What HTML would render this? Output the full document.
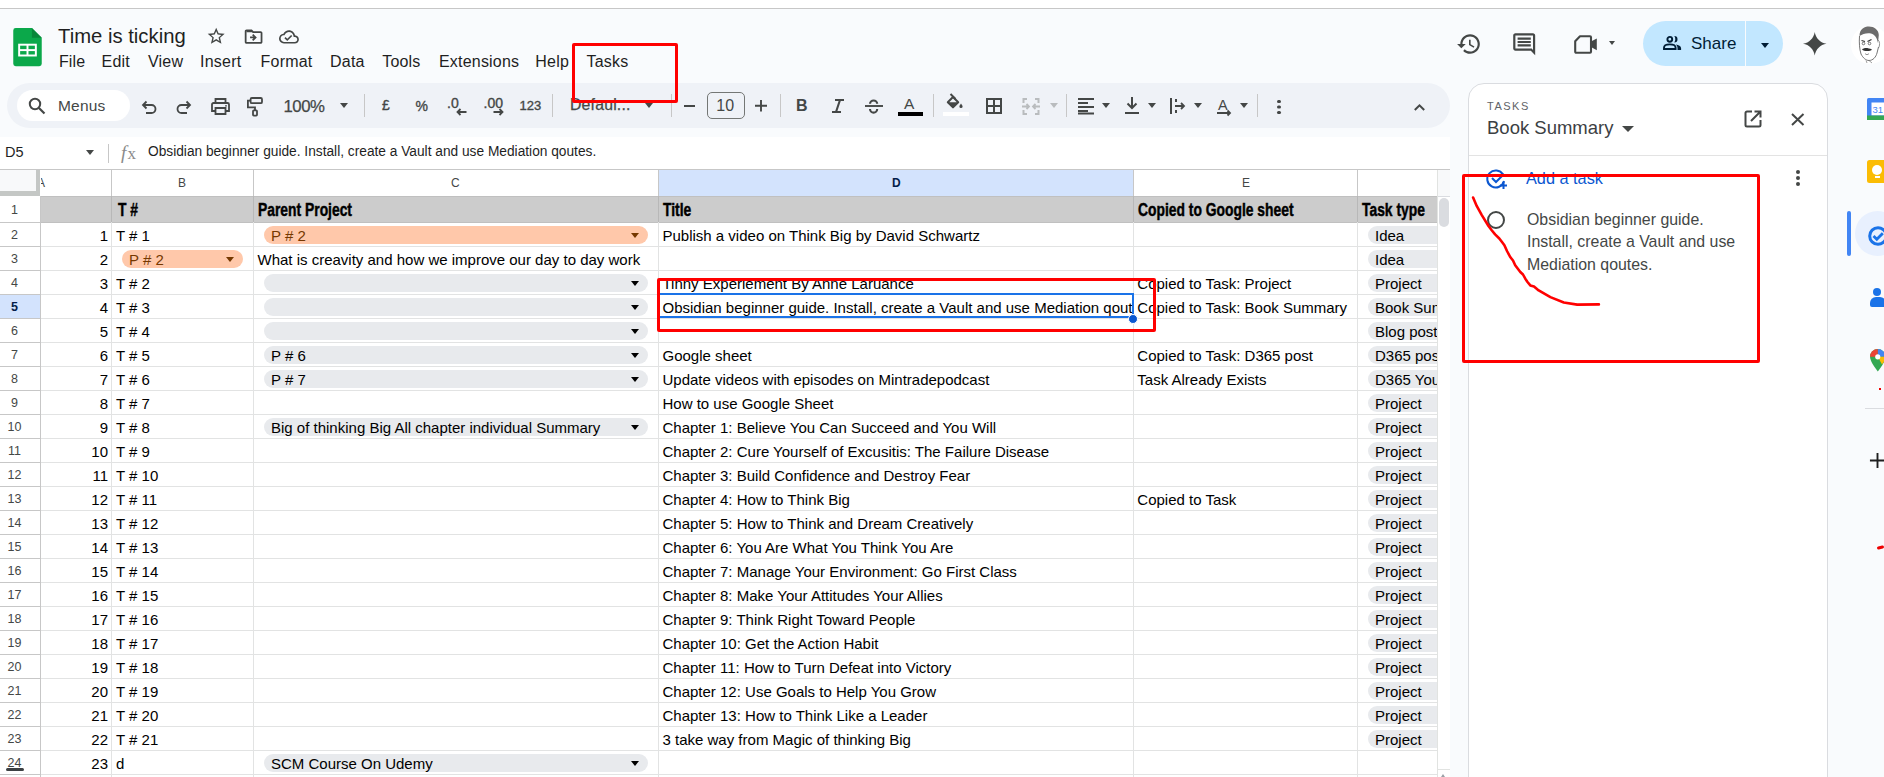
<!DOCTYPE html><html><head><meta charset="utf-8"><style>
*{box-sizing:border-box;margin:0;padding:0}
html,body{width:1884px;height:777px;overflow:hidden;background:#f9fbfd;font-family:"Liberation Sans",sans-serif;position:relative}
.abs{position:absolute}
.t{position:absolute;white-space:nowrap;line-height:1}
.c{position:absolute;white-space:nowrap;overflow:hidden;font-size:15px;color:#000;line-height:24px;height:24px}
.chip{position:absolute;border-radius:9px;background:#e8eaed;height:18px}
.arr{position:absolute;width:0;height:0;border-left:4.5px solid transparent;border-right:4.5px solid transparent;border-top:5px solid #000}
svg{position:absolute;overflow:visible}
.ic{fill:none;stroke:#444746;stroke-width:2}
</style></head><body>
<div class="abs" style="left:0;top:0;width:1884px;height:8px;background:#fff"></div>
<div class="abs" style="left:0;top:8px;width:1884px;height:1px;background:#c7c7c7"></div>
<svg style="left:13px;top:28px" width="29" height="38.3" viewBox="0 0 29 39">
<path d="M0 2.5a2.5 2.5 0 0 1 2.5-2.5h16.5l10 10v26.5a2.5 2.5 0 0 1-2.5 2.5H2.5A2.5 2.5 0 0 1 0 36.5z" fill="#0ba84a"/>
<path d="M19 0l10 10H19z" fill="#08873a"/>
<rect x="5" y="16" width="19" height="13" fill="#fff"/>
<rect x="7" y="18" width="6.5" height="3.5" fill="#0ba84a"/><rect x="15.5" y="18" width="6.5" height="3.5" fill="#0ba84a"/>
<rect x="7" y="23.5" width="6.5" height="3.5" fill="#0ba84a"/><rect x="15.5" y="23.5" width="6.5" height="3.5" fill="#0ba84a"/>
</svg>
<div class="t" style="left:58px;top:25.7px;font-size:20.3px;color:#1f1f1f">Time is ticking</div>
<svg style="left:206.4px;top:25.9px" width="20.4" height="20.4" viewBox="0 0 24 24"><path fill="#444746" d="M22 9.24l-7.19-.62L12 2 9.19 8.63 2 9.24l5.46 4.73L5.82 21 12 17.27 18.18 21l-1.63-7.03L22 9.24zM12 15.4l-3.76 2.27 1-4.28-3.320-2.88 4.38-.38L12 6.1l1.71 4.04 4.38.38-3.32 2.88 1 4.280L12 15.4z"/></svg>
<svg style="left:242.7px;top:26.3px" width="21.2" height="21.2" viewBox="0 0 24 24"><path fill="#444746" d="M20 6h-8l-2-2H4c-1.1 0-1.99.9-1.99 2L2 18c0 1.1.9 2 2 2h16c1.1 0 2-.9 2-2V8c0-1.1-.9-2-2-2zm0 12H4V6h5.17l2 2H20v10zm-8.16-6H8v2h3.84l-1.59 1.59L11.66 17 15.66 13l-4-4-1.41 1.41L11.84 12z"/><path fill="#444746" d="M4 5h6l1.5 2H4z"/></svg>
<svg style="left:279.2px;top:26.5px" width="19.9" height="19.9" viewBox="0 0 24 24"><path fill="#444746" d="M19.35 10.04C18.67 6.590 15.64 4 12 4 9.11 4 6.6 5.64 5.35 8.04 2.34 8.36 0 10.91 0 14c0 3.31 2.69 6 6 6h13c2.76 0 5-2.24 5-5 0-2.64-2.05-4.780-4.65-4.96zM19 18H6c-2.21 0-4-1.79-4-4 0-2.05 1.53-3.76 3.56-3.97l1.07-.11.5-.95C8.08 7.14 9.94 6 12 6c2.62 0 4.88 1.86 5.39 4.43l.3 1.5 1.53.11c1.56.1 2.78 1.41 2.78 2.96 0 1.65-1.35 3-3 3zm-9-3.82l-2.09-2.09L6.5 13.5 10 17l6.01-6.01-1.41-1.41z"/></svg>
<div class="t" style="left:58.9px;top:53.7px;font-size:16px;letter-spacing:0.2px;color:#1f1f1f">File</div>
<div class="t" style="left:101.60000000000001px;top:53.7px;font-size:16px;letter-spacing:0.2px;color:#1f1f1f">Edit</div>
<div class="t" style="left:148.0px;top:53.7px;font-size:16px;letter-spacing:0.2px;color:#1f1f1f">View</div>
<div class="t" style="left:200.1px;top:53.7px;font-size:16px;letter-spacing:0.2px;color:#1f1f1f">Insert</div>
<div class="t" style="left:260.59999999999997px;top:53.7px;font-size:16px;letter-spacing:0.2px;color:#1f1f1f">Format</div>
<div class="t" style="left:330.09999999999997px;top:53.7px;font-size:16px;letter-spacing:0.2px;color:#1f1f1f">Data</div>
<div class="t" style="left:382.2px;top:53.7px;font-size:16px;letter-spacing:0.2px;color:#1f1f1f">Tools</div>
<div class="t" style="left:439.0px;top:53.7px;font-size:16px;letter-spacing:0.2px;color:#1f1f1f">Extensions</div>
<div class="t" style="left:535.3px;top:53.7px;font-size:16px;letter-spacing:0.2px;color:#1f1f1f">Help</div>
<div class="t" style="left:586.5px;top:53.7px;font-size:16px;letter-spacing:0.2px;color:#1f1f1f">Tasks</div>
<svg style="left:1456.3px;top:31px" width="26" height="26" viewBox="0 0 24 24"><path fill="#444746" d="M13 3c-4.97 0-9 4.03-9 9H1l3.89 3.89.07.14L9 12H6c0-3.87 3.13-7 7-7s7 3.13 7 7-3.13 7-7 7c-1.93 0-3.68-.79-4.94-2.06l-1.42 1.42C8.27 19.99 10.51 21 13 21c4.97 0 9-4.03 9-9s-4.03-9-9-9zm-1 5v5l4.28 2.54.72-1.210-3.5-2.08V8H12z"/></svg>
<svg style="left:1510.8px;top:30.8px" width="26.4" height="26.4" viewBox="0 0 24 24"><path fill="#444746" d="M21.99 4c0-1.1-.89-2-1.99-2H4c-1.1 0-2 .9-2 2v12c0 1.1.9 2 2 2h14l4 4-.01-18zM20 4v13.17L18.83 16H4V4h16zM6 12h12v2H6zm0-3h12v2H6zm0-3h12v2H6z"/></svg>
<svg style="left:1574px;top:35px" width="24" height="19" viewBox="0 0 24 19"><path d="M1.2 6.2L6 1.2h10a1 1 0 0 1 1 1V16.8a1 1 0 0 1-1 1H2.2a1 1 0 0 1-1-1z" fill="none" stroke="#444746" stroke-width="2.1" stroke-linejoin="round"/><path d="M17 6.5L22.8 3.4V15.2L17 12z" fill="#444746"/></svg>
<div class="arr" style="left:1609px;top:41px;border-left-width:3.8px;border-right-width:3.8px;border-top-width:4px;border-top-color:#444746"></div>
<div class="abs" style="left:1643px;top:21px;width:140px;height:45px;border-radius:23px;background:#c2e7ff"></div>
<div class="abs" style="left:1744.8px;top:21px;width:1.2px;height:45px;background:#f9fbfd"></div>
<svg style="left:1663px;top:36px" width="19" height="14" viewBox="0 0 19 14"><circle cx="6.8" cy="3.3" r="2.4" fill="none" stroke="#001d35" stroke-width="1.9"/><path d="M1 13v-1.3C1 9.6 3.8 8.4 6.8 8.4s5.8 1.2 5.8 3.3V13z" fill="none" stroke="#001d35" stroke-width="1.9"/><path d="M11.3 0.1A3.2 3.2 0 1 1 11.3 6.5A6 6 0 0 0 11.3 0.1z" fill="#001d35"/><path d="M12.8 8.6c2.8 0.4 5.3 1.6 5.3 3.6V14h-3.6v-2c0-1.4-.6-2.5-1.7-3.4z" fill="#001d35"/></svg>
<div class="t" style="left:1691px;top:35px;font-size:17px;color:#001d35">Share</div>
<div class="arr" style="left:1761px;top:42.7px;border-top-color:#001d35"></div>
<svg style="left:1802.5px;top:31.5px" width="23.5" height="23.5" viewBox="0 0 24 24"><path d="M12 0C13 6.4 17.6 11 24 12 17.6 13 13 17.6 12 24 11 17.6 6.4 13 0 12 6.4 11 11 6.4 12 0z" fill="#444746"/></svg>
<div class="abs" style="left:1851px;top:25.5px;width:38px;height:38px;border-radius:50%;background:#fff"></div>
<svg style="left:1844px;top:18px" width="40" height="52" viewBox="0 0 40 52"><path d="M15.5 18C15.5 11 20 8.5 25 8.5S34.5 11.5 34.8 17L34 25C33 20 31 16.5 27 15.5 23 14.5 18.5 16 15.5 18z" fill="#6d6d6d"/><path d="M15.5 18C15 25 15.5 31 17 36 19 40 22 42.5 25 42.5 29 42.5 32 39 33 35L34.5 29" fill="none" stroke="#666" stroke-width="0.9"/><path d="M34 22C36 23 36 28 34.5 30" fill="none" stroke="#777" stroke-width="0.8"/><path d="M17.5 22.5L21 23.5M23.5 23.5L27.5 21.5" stroke="#333" stroke-width="1.3"/><circle cx="19.5" cy="25.5" r="1.3" fill="none" stroke="#555" stroke-width="0.8"/><circle cx="25.5" cy="25.5" r="1.3" fill="none" stroke="#555" stroke-width="0.8"/><path d="M18 31.5C20 29.5 23.5 29.5 28 31.5 26.5 33.5 20 33.5 18 31.5z" fill="#333"/><path d="M21 35.5C22 37 24 37 25 35.5" fill="none" stroke="#777" stroke-width="0.8"/><path d="M22 42.5L23 45M25 42.5L28 45" stroke="#888" stroke-width="0.8"/></svg>
<div class="abs" style="left:7px;top:83px;width:1443px;height:45px;border-radius:23px;background:#eff2f7"></div>
<div class="abs" style="left:17px;top:90px;width:113px;height:31px;border-radius:16px;background:#fff"></div>
<svg style="left:28px;top:97px" width="18" height="18" viewBox="0 0 18 18"><circle cx="7" cy="7" r="5.2" fill="none" stroke="#444746" stroke-width="2"/><path d="M11 11l5.5 5.5" stroke="#444746" stroke-width="2.2"/></svg>
<div class="t" style="left:58px;top:98px;font-size:15.5px;letter-spacing:0.2px;color:#444746">Menus</div>
<svg style="left:141px;top:100px" width="16" height="13" viewBox="0 0 16 13"><path d="M2 5h8.5a4 4 0 0 1 0 8H5" fill="none" stroke="#444746" stroke-width="1.8"/><path d="M5.5 1.5L2 5l3.5 3.5" fill="none" stroke="#444746" stroke-width="1.8"/></svg>
<svg style="left:176px;top:100px" width="16" height="13" viewBox="0 0 16 13"><path d="M14 5H5.5a4 4 0 0 0 0 8H11" fill="none" stroke="#444746" stroke-width="1.8"/><path d="M10.5 1.5L14 5l-3.5 3.5" fill="none" stroke="#444746" stroke-width="1.8"/></svg>
<svg style="left:211px;top:98px" width="19" height="17" viewBox="0 0 19 17"><path d="M4.5 5V1h10v4" fill="none" stroke="#444746" stroke-width="1.8"/><path d="M4 13H1V6.5a1.5 1.5 0 0 1 1.5-1.5h14A1.5 1.5 0 0 1 18 6.5V13h-3" fill="none" stroke="#444746" stroke-width="1.8"/><path d="M4.5 10h10v6h-10z" fill="none" stroke="#444746" stroke-width="1.8"/><circle cx="15" cy="7.8" r="0.9" fill="#444746"/></svg>
<svg style="left:246px;top:97px" width="17" height="20" viewBox="0 0 17 20"><rect x="4.6" y="1" width="11.4" height="5.2" rx="1.3" fill="none" stroke="#444746" stroke-width="1.8"/><path d="M4.6 3.6H1.9V10.4H9V13.4" fill="none" stroke="#444746" stroke-width="1.8"/><rect x="7" y="13.4" width="4" height="5.2" rx="0.8" fill="none" stroke="#444746" stroke-width="1.8"/></svg>
<div class="t" style="left:283.5px;top:98.6px;font-size:16.8px;letter-spacing:-0.5px;-webkit-text-stroke:0.25px #444746;color:#444746">100%</div>
<div class="arr" style="left:340px;top:103px;border-top-color:#444746"></div>
<div class="abs" style="left:364px;top:94px;width:1px;height:23px;background:#c7c7c7"></div>
<div class="abs" style="left:552px;top:94px;width:1px;height:23px;background:#c7c7c7"></div>
<div class="abs" style="left:671px;top:94px;width:1px;height:23px;background:#c7c7c7"></div>
<div class="abs" style="left:780px;top:94px;width:1px;height:23px;background:#c7c7c7"></div>
<div class="abs" style="left:933px;top:94px;width:1px;height:23px;background:#c7c7c7"></div>
<div class="abs" style="left:1066px;top:94px;width:1px;height:23px;background:#c7c7c7"></div>
<div class="abs" style="left:1257px;top:94px;width:1px;height:23px;background:#c7c7c7"></div>
<div class="t" style="left:382px;top:98px;font-size:14px;-webkit-text-stroke:0.35px #444746;color:#444746">£</div>
<div class="t" style="left:415.5px;top:98.5px;font-size:14px;-webkit-text-stroke:0.35px #444746;color:#444746">%</div>
<div class="t" style="left:447px;top:95.5px;font-size:14px;-webkit-text-stroke:0.35px #444746;color:#444746">.0</div>
<svg style="left:456px;top:108px" width="11" height="8" viewBox="0 0 11 8"><path d="M10.5 4H2M4.5 1L1.5 4l3 3" fill="none" stroke="#444746" stroke-width="1.8"/></svg>
<div class="t" style="left:483.5px;top:95.5px;font-size:14px;-webkit-text-stroke:0.35px #444746;color:#444746">.00</div>
<svg style="left:492.5px;top:108px" width="11" height="8" viewBox="0 0 11 8"><path d="M0.5 4H9M6.5 1l3 3-3 3" fill="none" stroke="#444746" stroke-width="1.8"/></svg>
<div class="t" style="left:519.5px;top:98.5px;font-size:13px;-webkit-text-stroke:0.35px #444746;color:#444746">123</div>
<div class="t" style="left:570px;top:96.8px;font-size:15.8px;letter-spacing:0.2px;-webkit-text-stroke:0.25px #444746;color:#444746">Defaul...</div>
<div class="arr" style="left:645px;top:103px;border-top-color:#444746"></div>
<div class="abs" style="left:684px;top:105px;width:11px;height:2px;background:#444746"></div>
<div class="abs" style="left:707px;top:92px;width:38px;height:27px;border:1px solid #747775;border-radius:5px"></div>
<div class="t" style="left:716.3px;top:97.6px;font-size:16px;color:#444746">10</div>
<svg style="left:755.3px;top:100px" width="12" height="11.5" viewBox="0 0 12 11.5"><path d="M6 0v11.5M0 5.8h12" stroke="#444746" stroke-width="1.9"/></svg>
<div class="t" style="left:796px;top:98px;font-size:16px;color:#444746;font-weight:bold">B</div>
<svg style="left:830px;top:97px" width="16" height="17" viewBox="0 0 16 17"><path d="M5 3h9M2 15h9M10 3L6 15" fill="none" stroke="#444746" stroke-width="2.1"/></svg>
<svg style="left:864px;top:99px" width="20" height="16" viewBox="0 0 20 16"><path d="M1 7h18" stroke="#444746" stroke-width="1.9"/><path d="M6 4.8a3.6 3.3 0 0 1 7.2 0M6 10a3.6 3.6 0 0 0 7.2 0" fill="none" stroke="#444746" stroke-width="2.1"/></svg>
<div class="t" style="left:904px;top:96px;font-size:15.5px;color:#444746">A</div>
<div class="abs" style="left:898px;top:112px;width:25px;height:4px;background:#000"></div>
<svg style="left:946px;top:93px" width="18" height="16" viewBox="0 0 18 16"><path d="M4.5 1l5 5" stroke="#444746" stroke-width="2"/><path d="M7 4L1.8 9.2l5.2 5.2 5.2-5.2z" fill="none" stroke="#444746" stroke-width="2" stroke-linejoin="round"/><path d="M2.2 9.2h10l-5.2 5.2z" fill="#444746"/><path d="M15 10.5c.9 1.3 1.6 2.1 1.6 2.9a1.6 1.6 0 0 1-3.2 0c0-.8.7-1.6 1.6-2.9z" fill="#444746"/></svg>
<div class="abs" style="left:943px;top:112px;width:26px;height:4px;background:#fff"></div>
<svg style="left:986px;top:98px" width="16" height="16" viewBox="0 0 16 16"><path d="M1 1h14v14H1zM8 1v14M1 8h14" fill="none" stroke="#444746" stroke-width="2"/></svg>
<svg style="left:1022px;top:98px" width="18" height="17" viewBox="0 0 18 17"><path d="M5 1H1.5v4M1.5 12v4H5M13 1h3.5v4M16.5 12v4H13" fill="none" stroke="#b9bcbe" stroke-width="2"/><path d="M0 8.5h7M4.5 6L7 8.5 4.5 11M18 8.5h-7M13.5 6L11 8.5l2.5 2.5" fill="none" stroke="#b9bcbe" stroke-width="1.8"/></svg>
<div class="arr" style="left:1050px;top:103px;border-top-color:#b9bcbe"></div>
<svg style="left:1078px;top:98px" width="16" height="16" viewBox="0 0 16 16"><path d="M0 1h16M0 5h10M0 9h16M0 13h10M0 15.5h16" stroke="#444746" stroke-width="2"/></svg>
<div class="arr" style="left:1102px;top:103px;border-top-color:#444746"></div>
<svg style="left:1125px;top:97px" width="14" height="17" viewBox="0 0 14 17"><path d="M7 0v11M2.5 6.5L7 11l4.5-4.5M0 16h14" fill="none" stroke="#444746" stroke-width="2"/></svg>
<div class="arr" style="left:1148px;top:103px;border-top-color:#444746"></div>
<svg style="left:1170px;top:98px" width="15" height="16" viewBox="0 0 15 16"><path d="M1 0v16M6 1v3M6 7v2M6 12v3" fill="none" stroke="#444746" stroke-width="2"/><path d="M6 8h8M11 5l3 3-3 3" fill="none" stroke="#444746" stroke-width="1.8"/></svg>
<div class="arr" style="left:1194px;top:103px;border-top-color:#444746"></div>
<div class="t" style="left:1218px;top:98px;font-size:14.5px;color:#444746">A</div>
<svg style="left:1217px;top:109px" width="15" height="8" viewBox="0 0 15 8"><path d="M0 4h13M10.5 1.5L13 4l-2.5 2.5" fill="none" stroke="#444746" stroke-width="1.8"/></svg>
<div class="arr" style="left:1240px;top:103px;border-top-color:#444746"></div>
<div class="abs" style="left:1277px;top:99.5px;width:3.5px;height:3.5px;border-radius:2px;background:#444746;box-shadow:0 5.5px 0 #444746,0 11px 0 #444746"></div>
<svg style="left:1414px;top:102.5px" width="11" height="8" viewBox="0 0 11 8"><path d="M0.8 7l4.7-4.7 4.7 4.7" fill="none" stroke="#444746" stroke-width="2"/></svg>
<div class="abs" style="left:0;top:137px;width:1450px;height:32px;background:#fff"></div>
<div class="t" style="left:5px;top:145px;font-size:14.5px;color:#1f1f1f">D5</div>
<div class="arr" style="left:86px;top:150px;border-top-color:#444746"></div>
<div class="abs" style="left:108px;top:144px;width:1px;height:19px;background:#c7c7c7"></div>
<div class="t" style="left:121px;top:143px;font-size:19px;color:#8a8a8a;font-style:italic;font-family:'Liberation Serif',serif">f</div><div class="t" style="left:127.5px;top:145px;font-size:17px;color:#8a8a8a;font-family:'Liberation Serif',serif">x</div>
<div class="t" style="left:147.5px;top:143.8px;font-size:14px;transform:scaleX(0.98);transform-origin:0 0;color:#1f1f1f">Obsidian beginner guide. Install, create a Vault and use Mediation qoutes.</div>
<div class="abs" style="left:0;top:169px;width:1437px;height:608px;background:#fff"></div>
<div class="abs" style="left:1437px;top:169px;width:13px;height:608px;background:#fff"></div>
<div class="abs" style="left:1437px;top:769px;width:13px;height:1px;background:#e1e3e1"></div>
<div class="abs" style="left:1441px;top:774px;width:0;height:0;border-left:2.5px solid transparent;border-right:2.5px solid transparent;border-bottom:3px solid #9aa0a6"></div>
<div class="abs" style="left:1437px;top:170px;width:13px;height:26px;background:#f8f9fa"></div>
<div class="abs" style="left:1437px;top:196px;width:13px;height:1px;background:#dadce0"></div>
<div class="abs" style="left:1437px;top:170px;width:1px;height:607px;background:#e1e3e1"></div>
<div class="abs" style="left:658px;top:170px;width:475px;height:26px;background:#d3e3fd"></div>
<div class="abs" style="left:0;top:170px;width:36px;height:21px;background:#f8f9fa"></div>
<div class="abs" style="left:36px;top:170px;width:4px;height:26px;background:#c4c7c5"></div>
<div class="abs" style="left:0;top:191px;width:40px;height:5px;background:#c4c7c5"></div>
<div class="abs" style="left:40px;top:196px;width:1397px;height:26px;background:#cccccc"></div>
<div class="abs" style="left:0;top:294px;width:40px;height:24px;background:#d3e3fd"></div>
<div class="abs" style="left:0;top:169px;width:1450px;height:1px;background:#c7c7c7"></div>
<div class="abs" style="left:40px;top:196px;width:1397px;height:1px;background:#c0c0c0"></div>
<div class="abs" style="left:40px;top:222px;width:1397px;height:1px;background:#c0c0c0"></div>
<div class="abs" style="left:0;top:222px;width:40px;height:1px;background:#c7c7c7"></div>
<div class="abs" style="left:40px;top:246px;width:1397px;height:1px;background:#e2e3e3"></div>
<div class="abs" style="left:0;top:246px;width:40px;height:1px;background:#c7c7c7"></div>
<div class="abs" style="left:40px;top:270px;width:1397px;height:1px;background:#e2e3e3"></div>
<div class="abs" style="left:0;top:270px;width:40px;height:1px;background:#c7c7c7"></div>
<div class="abs" style="left:40px;top:294px;width:1397px;height:1px;background:#e2e3e3"></div>
<div class="abs" style="left:0;top:294px;width:40px;height:1px;background:#c7c7c7"></div>
<div class="abs" style="left:40px;top:318px;width:1397px;height:1px;background:#e2e3e3"></div>
<div class="abs" style="left:0;top:318px;width:40px;height:1px;background:#c7c7c7"></div>
<div class="abs" style="left:40px;top:342px;width:1397px;height:1px;background:#e2e3e3"></div>
<div class="abs" style="left:0;top:342px;width:40px;height:1px;background:#c7c7c7"></div>
<div class="abs" style="left:40px;top:366px;width:1397px;height:1px;background:#e2e3e3"></div>
<div class="abs" style="left:0;top:366px;width:40px;height:1px;background:#c7c7c7"></div>
<div class="abs" style="left:40px;top:390px;width:1397px;height:1px;background:#e2e3e3"></div>
<div class="abs" style="left:0;top:390px;width:40px;height:1px;background:#c7c7c7"></div>
<div class="abs" style="left:40px;top:414px;width:1397px;height:1px;background:#e2e3e3"></div>
<div class="abs" style="left:0;top:414px;width:40px;height:1px;background:#c7c7c7"></div>
<div class="abs" style="left:40px;top:438px;width:1397px;height:1px;background:#e2e3e3"></div>
<div class="abs" style="left:0;top:438px;width:40px;height:1px;background:#c7c7c7"></div>
<div class="abs" style="left:40px;top:462px;width:1397px;height:1px;background:#e2e3e3"></div>
<div class="abs" style="left:0;top:462px;width:40px;height:1px;background:#c7c7c7"></div>
<div class="abs" style="left:40px;top:486px;width:1397px;height:1px;background:#e2e3e3"></div>
<div class="abs" style="left:0;top:486px;width:40px;height:1px;background:#c7c7c7"></div>
<div class="abs" style="left:40px;top:510px;width:1397px;height:1px;background:#e2e3e3"></div>
<div class="abs" style="left:0;top:510px;width:40px;height:1px;background:#c7c7c7"></div>
<div class="abs" style="left:40px;top:534px;width:1397px;height:1px;background:#e2e3e3"></div>
<div class="abs" style="left:0;top:534px;width:40px;height:1px;background:#c7c7c7"></div>
<div class="abs" style="left:40px;top:558px;width:1397px;height:1px;background:#e2e3e3"></div>
<div class="abs" style="left:0;top:558px;width:40px;height:1px;background:#c7c7c7"></div>
<div class="abs" style="left:40px;top:582px;width:1397px;height:1px;background:#e2e3e3"></div>
<div class="abs" style="left:0;top:582px;width:40px;height:1px;background:#c7c7c7"></div>
<div class="abs" style="left:40px;top:606px;width:1397px;height:1px;background:#e2e3e3"></div>
<div class="abs" style="left:0;top:606px;width:40px;height:1px;background:#c7c7c7"></div>
<div class="abs" style="left:40px;top:630px;width:1397px;height:1px;background:#e2e3e3"></div>
<div class="abs" style="left:0;top:630px;width:40px;height:1px;background:#c7c7c7"></div>
<div class="abs" style="left:40px;top:654px;width:1397px;height:1px;background:#e2e3e3"></div>
<div class="abs" style="left:0;top:654px;width:40px;height:1px;background:#c7c7c7"></div>
<div class="abs" style="left:40px;top:678px;width:1397px;height:1px;background:#e2e3e3"></div>
<div class="abs" style="left:0;top:678px;width:40px;height:1px;background:#c7c7c7"></div>
<div class="abs" style="left:40px;top:702px;width:1397px;height:1px;background:#e2e3e3"></div>
<div class="abs" style="left:0;top:702px;width:40px;height:1px;background:#c7c7c7"></div>
<div class="abs" style="left:40px;top:726px;width:1397px;height:1px;background:#e2e3e3"></div>
<div class="abs" style="left:0;top:726px;width:40px;height:1px;background:#c7c7c7"></div>
<div class="abs" style="left:40px;top:750px;width:1397px;height:1px;background:#e2e3e3"></div>
<div class="abs" style="left:0;top:750px;width:40px;height:1px;background:#c7c7c7"></div>
<div class="abs" style="left:40px;top:774px;width:1397px;height:1px;background:#e2e3e3"></div>
<div class="abs" style="left:0;top:774px;width:40px;height:1px;background:#c7c7c7"></div>
<div class="abs" style="left:111px;top:196px;width:1px;height:581px;background:#e2e3e3"></div>
<div class="abs" style="left:111px;top:170px;width:1px;height:26px;background:#c7c7c7"></div>
<div class="abs" style="left:111px;top:196px;width:1px;height:26px;background:#b8b8b8"></div>
<div class="abs" style="left:253px;top:196px;width:1px;height:581px;background:#e2e3e3"></div>
<div class="abs" style="left:253px;top:170px;width:1px;height:26px;background:#c7c7c7"></div>
<div class="abs" style="left:253px;top:196px;width:1px;height:26px;background:#b8b8b8"></div>
<div class="abs" style="left:658px;top:196px;width:1px;height:581px;background:#e2e3e3"></div>
<div class="abs" style="left:658px;top:170px;width:1px;height:26px;background:#c7c7c7"></div>
<div class="abs" style="left:658px;top:196px;width:1px;height:26px;background:#b8b8b8"></div>
<div class="abs" style="left:1133px;top:196px;width:1px;height:581px;background:#e2e3e3"></div>
<div class="abs" style="left:1133px;top:170px;width:1px;height:26px;background:#c7c7c7"></div>
<div class="abs" style="left:1133px;top:196px;width:1px;height:26px;background:#b8b8b8"></div>
<div class="abs" style="left:1357px;top:196px;width:1px;height:581px;background:#e2e3e3"></div>
<div class="abs" style="left:1357px;top:170px;width:1px;height:26px;background:#c7c7c7"></div>
<div class="abs" style="left:1357px;top:196px;width:1px;height:26px;background:#b8b8b8"></div>
<div class="abs" style="left:40px;top:196px;width:1px;height:581px;background:#c7c7c7"></div>
<div class="t" style="left:178px;top:177px;font-size:12px;color:#444746">B</div>
<div class="t" style="left:451px;top:177px;font-size:12px;color:#444746">C</div>
<div class="t" style="left:892px;top:177px;font-size:12px;color:#041e49;font-weight:bold">D</div>
<div class="t" style="left:1242px;top:177px;font-size:12px;color:#444746">E</div>
<div class="abs" style="left:41px;top:170px;width:8px;height:25px;overflow:hidden"><div class="t" style="left:-4px;top:7px;font-size:12px;color:#444746">A</div></div>
<div class="t" style="left:0;width:29px;text-align:center;top:204px;font-size:12.5px;color:#444746;">1</div>
<div class="t" style="left:0;width:29px;text-align:center;top:229px;font-size:12.5px;color:#444746;">2</div>
<div class="t" style="left:0;width:29px;text-align:center;top:253px;font-size:12.5px;color:#444746;">3</div>
<div class="t" style="left:0;width:29px;text-align:center;top:277px;font-size:12.5px;color:#444746;">4</div>
<div class="t" style="left:0;width:29px;text-align:center;top:301px;font-size:12.5px;font-weight:bold;color:#041e49;">5</div>
<div class="t" style="left:0;width:29px;text-align:center;top:325px;font-size:12.5px;color:#444746;">6</div>
<div class="t" style="left:0;width:29px;text-align:center;top:349px;font-size:12.5px;color:#444746;">7</div>
<div class="t" style="left:0;width:29px;text-align:center;top:373px;font-size:12.5px;color:#444746;">8</div>
<div class="t" style="left:0;width:29px;text-align:center;top:397px;font-size:12.5px;color:#444746;">9</div>
<div class="t" style="left:0;width:29px;text-align:center;top:421px;font-size:12.5px;color:#444746;">10</div>
<div class="t" style="left:0;width:29px;text-align:center;top:445px;font-size:12.5px;color:#444746;">11</div>
<div class="t" style="left:0;width:29px;text-align:center;top:469px;font-size:12.5px;color:#444746;">12</div>
<div class="t" style="left:0;width:29px;text-align:center;top:493px;font-size:12.5px;color:#444746;">13</div>
<div class="t" style="left:0;width:29px;text-align:center;top:517px;font-size:12.5px;color:#444746;">14</div>
<div class="t" style="left:0;width:29px;text-align:center;top:541px;font-size:12.5px;color:#444746;">15</div>
<div class="t" style="left:0;width:29px;text-align:center;top:565px;font-size:12.5px;color:#444746;">16</div>
<div class="t" style="left:0;width:29px;text-align:center;top:589px;font-size:12.5px;color:#444746;">17</div>
<div class="t" style="left:0;width:29px;text-align:center;top:613px;font-size:12.5px;color:#444746;">18</div>
<div class="t" style="left:0;width:29px;text-align:center;top:637px;font-size:12.5px;color:#444746;">19</div>
<div class="t" style="left:0;width:29px;text-align:center;top:661px;font-size:12.5px;color:#444746;">20</div>
<div class="t" style="left:0;width:29px;text-align:center;top:685px;font-size:12.5px;color:#444746;">21</div>
<div class="t" style="left:0;width:29px;text-align:center;top:709px;font-size:12.5px;color:#444746;">22</div>
<div class="t" style="left:0;width:29px;text-align:center;top:733px;font-size:12.5px;color:#444746;">23</div>
<div class="t" style="left:0;width:29px;text-align:center;top:757px;font-size:12.5px;color:#444746;">24</div>
<div class="abs" style="left:6px;top:768px;width:18px;height:3px;border-radius:1.5px;background:#3c4043"></div>
<div class="t" style="left:118px;top:201px;font-size:18px;font-weight:bold;color:#000;-webkit-text-stroke:0.45px #000;transform:scaleX(0.77);transform-origin:0 0">T #</div>
<div class="t" style="left:258px;top:201px;font-size:18px;font-weight:bold;color:#000;-webkit-text-stroke:0.45px #000;transform:scaleX(0.77);transform-origin:0 0">Parent Project</div>
<div class="t" style="left:663px;top:201px;font-size:18px;font-weight:bold;color:#000;-webkit-text-stroke:0.45px #000;transform:scaleX(0.77);transform-origin:0 0">Title</div>
<div class="t" style="left:1138px;top:201px;font-size:18px;font-weight:bold;color:#000;-webkit-text-stroke:0.45px #000;transform:scaleX(0.77);transform-origin:0 0">Copied to Google sheet</div>
<div class="t" style="left:1362px;top:201px;font-size:18px;font-weight:bold;color:#000;-webkit-text-stroke:0.45px #000;transform:scaleX(0.77);transform-origin:0 0">Task type</div>
<div class="c" style="left:40px;top:223.5px;width:71px;text-align:right;padding-right:3px">1</div>
<div class="c" style="left:112px;top:223.5px;width:140px;padding-left:4px">T # 1</div>
<div class="chip" style="left:264px;top:225.5px;width:384px;background:#ffc8aa"></div>
<div class="t" style="left:271px;top:228px;font-size:15px;color:#753800">P # 2</div>
<div class="arr" style="left:631px;top:232.5px;border-top-color:#753800"></div>
<div class="c" style="left:659px;top:223.5px;width:474px;padding-left:3.5px">Publish a video on Think Big by David Schwartz</div>
<div class="c" style="left:1134px;top:223.5px;width:223px;padding-left:3.3px"></div>
<div class="abs" style="left:1358px;top:223px;width:79px;height:23px;overflow:hidden"><div class="chip" style="left:10px;top:2.5px;width:90px"></div><div class="c" style="left:17px;top:0.5px;width:62px">Idea</div></div>
<div class="c" style="left:40px;top:247.5px;width:71px;text-align:right;padding-right:3px">2</div>
<div class="chip" style="left:122px;top:249.5px;width:121px;background:#ffc8aa"></div>
<div class="t" style="left:129px;top:252px;font-size:15px;color:#753800">P # 2</div>
<div class="arr" style="left:226px;top:256.5px;border-top-color:#753800"></div>
<div class="c" style="left:254px;top:247.5px;width:400px;padding-left:3.5px">What is creavity and how we improve our day to day work</div>
<div class="c" style="left:659px;top:247.5px;width:474px;padding-left:3.5px"></div>
<div class="c" style="left:1134px;top:247.5px;width:223px;padding-left:3.3px"></div>
<div class="abs" style="left:1358px;top:247px;width:79px;height:23px;overflow:hidden"><div class="chip" style="left:10px;top:2.5px;width:90px"></div><div class="c" style="left:17px;top:0.5px;width:62px">Idea</div></div>
<div class="c" style="left:40px;top:271.5px;width:71px;text-align:right;padding-right:3px">3</div>
<div class="c" style="left:112px;top:271.5px;width:140px;padding-left:4px">T # 2</div>
<div class="chip" style="left:264px;top:273.5px;width:384px;background:#e8eaed"></div>
<div class="arr" style="left:631px;top:280.5px;border-top-color:#000"></div>
<div class="c" style="left:659px;top:271.5px;width:474px;padding-left:3.5px">Tinny Experiement By Anne Laruance</div>
<div class="c" style="left:1134px;top:271.5px;width:223px;padding-left:3.3px">Copied to Task: Project</div>
<div class="abs" style="left:1358px;top:271px;width:79px;height:23px;overflow:hidden"><div class="chip" style="left:10px;top:2.5px;width:90px"></div><div class="c" style="left:17px;top:0.5px;width:62px">Project</div></div>
<div class="c" style="left:40px;top:295.5px;width:71px;text-align:right;padding-right:3px">4</div>
<div class="c" style="left:112px;top:295.5px;width:140px;padding-left:4px">T # 3</div>
<div class="chip" style="left:264px;top:297.5px;width:384px;background:#e8eaed"></div>
<div class="arr" style="left:631px;top:304.5px;border-top-color:#000"></div>
<div class="c" style="left:659px;top:295.5px;width:474px;padding-left:3.5px">Obsidian beginner guide. Install, create a Vault and use Mediation qoutes.</div>
<div class="c" style="left:1134px;top:295.5px;width:223px;padding-left:3.3px">Copied to Task: Book Summary</div>
<div class="abs" style="left:1358px;top:295px;width:79px;height:23px;overflow:hidden"><div class="chip" style="left:10px;top:2.5px;width:90px"></div><div class="c" style="left:17px;top:0.5px;width:62px">Book Summary</div></div>
<div class="c" style="left:40px;top:319.5px;width:71px;text-align:right;padding-right:3px">5</div>
<div class="c" style="left:112px;top:319.5px;width:140px;padding-left:4px">T # 4</div>
<div class="chip" style="left:264px;top:321.5px;width:384px;background:#e8eaed"></div>
<div class="arr" style="left:631px;top:328.5px;border-top-color:#000"></div>
<div class="c" style="left:659px;top:319.5px;width:474px;padding-left:3.5px"></div>
<div class="c" style="left:1134px;top:319.5px;width:223px;padding-left:3.3px"></div>
<div class="abs" style="left:1358px;top:319px;width:79px;height:23px;overflow:hidden"><div class="chip" style="left:10px;top:2.5px;width:90px"></div><div class="c" style="left:17px;top:0.5px;width:62px">Blog post</div></div>
<div class="c" style="left:40px;top:343.5px;width:71px;text-align:right;padding-right:3px">6</div>
<div class="c" style="left:112px;top:343.5px;width:140px;padding-left:4px">T # 5</div>
<div class="chip" style="left:264px;top:345.5px;width:384px;background:#e8eaed"></div>
<div class="t" style="left:271px;top:348px;font-size:15px;color:#000">P # 6</div>
<div class="arr" style="left:631px;top:352.5px;border-top-color:#000"></div>
<div class="c" style="left:659px;top:343.5px;width:474px;padding-left:3.5px">Google sheet</div>
<div class="c" style="left:1134px;top:343.5px;width:223px;padding-left:3.3px">Copied to Task: D365 post</div>
<div class="abs" style="left:1358px;top:343px;width:79px;height:23px;overflow:hidden"><div class="chip" style="left:10px;top:2.5px;width:90px"></div><div class="c" style="left:17px;top:0.5px;width:62px">D365 post</div></div>
<div class="c" style="left:40px;top:367.5px;width:71px;text-align:right;padding-right:3px">7</div>
<div class="c" style="left:112px;top:367.5px;width:140px;padding-left:4px">T # 6</div>
<div class="chip" style="left:264px;top:369.5px;width:384px;background:#e8eaed"></div>
<div class="t" style="left:271px;top:372px;font-size:15px;color:#000">P # 7</div>
<div class="arr" style="left:631px;top:376.5px;border-top-color:#000"></div>
<div class="c" style="left:659px;top:367.5px;width:474px;padding-left:3.5px">Update videos with episodes on Mintradepodcast</div>
<div class="c" style="left:1134px;top:367.5px;width:223px;padding-left:3.3px">Task Already Exists</div>
<div class="abs" style="left:1358px;top:367px;width:79px;height:23px;overflow:hidden"><div class="chip" style="left:10px;top:2.5px;width:90px"></div><div class="c" style="left:17px;top:0.5px;width:62px">D365 YouTube</div></div>
<div class="c" style="left:40px;top:391.5px;width:71px;text-align:right;padding-right:3px">8</div>
<div class="c" style="left:112px;top:391.5px;width:140px;padding-left:4px">T # 7</div>
<div class="c" style="left:254px;top:391.5px;width:400px;padding-left:3.5px"></div>
<div class="c" style="left:659px;top:391.5px;width:474px;padding-left:3.5px">How to use Google Sheet</div>
<div class="c" style="left:1134px;top:391.5px;width:223px;padding-left:3.3px"></div>
<div class="abs" style="left:1358px;top:391px;width:79px;height:23px;overflow:hidden"><div class="chip" style="left:10px;top:2.5px;width:90px"></div><div class="c" style="left:17px;top:0.5px;width:62px">Project</div></div>
<div class="c" style="left:40px;top:415.5px;width:71px;text-align:right;padding-right:3px">9</div>
<div class="c" style="left:112px;top:415.5px;width:140px;padding-left:4px">T # 8</div>
<div class="chip" style="left:264px;top:417.5px;width:384px;background:#e8eaed"></div>
<div class="t" style="left:271px;top:420px;font-size:15px;color:#000">Big of thinking Big All chapter individual Summary</div>
<div class="arr" style="left:631px;top:424.5px;border-top-color:#000"></div>
<div class="c" style="left:659px;top:415.5px;width:474px;padding-left:3.5px">Chapter 1: Believe You Can Succeed and You Will</div>
<div class="c" style="left:1134px;top:415.5px;width:223px;padding-left:3.3px"></div>
<div class="abs" style="left:1358px;top:415px;width:79px;height:23px;overflow:hidden"><div class="chip" style="left:10px;top:2.5px;width:90px"></div><div class="c" style="left:17px;top:0.5px;width:62px">Project</div></div>
<div class="c" style="left:40px;top:439.5px;width:71px;text-align:right;padding-right:3px">10</div>
<div class="c" style="left:112px;top:439.5px;width:140px;padding-left:4px">T # 9</div>
<div class="c" style="left:254px;top:439.5px;width:400px;padding-left:3.5px"></div>
<div class="c" style="left:659px;top:439.5px;width:474px;padding-left:3.5px">Chapter 2: Cure Yourself of Excusitis: The Failure Disease</div>
<div class="c" style="left:1134px;top:439.5px;width:223px;padding-left:3.3px"></div>
<div class="abs" style="left:1358px;top:439px;width:79px;height:23px;overflow:hidden"><div class="chip" style="left:10px;top:2.5px;width:90px"></div><div class="c" style="left:17px;top:0.5px;width:62px">Project</div></div>
<div class="c" style="left:40px;top:463.5px;width:71px;text-align:right;padding-right:3px">11</div>
<div class="c" style="left:112px;top:463.5px;width:140px;padding-left:4px">T # 10</div>
<div class="c" style="left:254px;top:463.5px;width:400px;padding-left:3.5px"></div>
<div class="c" style="left:659px;top:463.5px;width:474px;padding-left:3.5px">Chapter 3: Build Confidence and Destroy Fear</div>
<div class="c" style="left:1134px;top:463.5px;width:223px;padding-left:3.3px"></div>
<div class="abs" style="left:1358px;top:463px;width:79px;height:23px;overflow:hidden"><div class="chip" style="left:10px;top:2.5px;width:90px"></div><div class="c" style="left:17px;top:0.5px;width:62px">Project</div></div>
<div class="c" style="left:40px;top:487.5px;width:71px;text-align:right;padding-right:3px">12</div>
<div class="c" style="left:112px;top:487.5px;width:140px;padding-left:4px">T # 11</div>
<div class="c" style="left:254px;top:487.5px;width:400px;padding-left:3.5px"></div>
<div class="c" style="left:659px;top:487.5px;width:474px;padding-left:3.5px">Chapter 4: How to Think Big</div>
<div class="c" style="left:1134px;top:487.5px;width:223px;padding-left:3.3px">Copied to Task</div>
<div class="abs" style="left:1358px;top:487px;width:79px;height:23px;overflow:hidden"><div class="chip" style="left:10px;top:2.5px;width:90px"></div><div class="c" style="left:17px;top:0.5px;width:62px">Project</div></div>
<div class="c" style="left:40px;top:511.5px;width:71px;text-align:right;padding-right:3px">13</div>
<div class="c" style="left:112px;top:511.5px;width:140px;padding-left:4px">T # 12</div>
<div class="c" style="left:254px;top:511.5px;width:400px;padding-left:3.5px"></div>
<div class="c" style="left:659px;top:511.5px;width:474px;padding-left:3.5px">Chapter 5: How to Think and Dream Creatively</div>
<div class="c" style="left:1134px;top:511.5px;width:223px;padding-left:3.3px"></div>
<div class="abs" style="left:1358px;top:511px;width:79px;height:23px;overflow:hidden"><div class="chip" style="left:10px;top:2.5px;width:90px"></div><div class="c" style="left:17px;top:0.5px;width:62px">Project</div></div>
<div class="c" style="left:40px;top:535.5px;width:71px;text-align:right;padding-right:3px">14</div>
<div class="c" style="left:112px;top:535.5px;width:140px;padding-left:4px">T # 13</div>
<div class="c" style="left:254px;top:535.5px;width:400px;padding-left:3.5px"></div>
<div class="c" style="left:659px;top:535.5px;width:474px;padding-left:3.5px">Chapter 6: You Are What You Think You Are</div>
<div class="c" style="left:1134px;top:535.5px;width:223px;padding-left:3.3px"></div>
<div class="abs" style="left:1358px;top:535px;width:79px;height:23px;overflow:hidden"><div class="chip" style="left:10px;top:2.5px;width:90px"></div><div class="c" style="left:17px;top:0.5px;width:62px">Project</div></div>
<div class="c" style="left:40px;top:559.5px;width:71px;text-align:right;padding-right:3px">15</div>
<div class="c" style="left:112px;top:559.5px;width:140px;padding-left:4px">T # 14</div>
<div class="c" style="left:254px;top:559.5px;width:400px;padding-left:3.5px"></div>
<div class="c" style="left:659px;top:559.5px;width:474px;padding-left:3.5px">Chapter 7: Manage Your Environment: Go First Class</div>
<div class="c" style="left:1134px;top:559.5px;width:223px;padding-left:3.3px"></div>
<div class="abs" style="left:1358px;top:559px;width:79px;height:23px;overflow:hidden"><div class="chip" style="left:10px;top:2.5px;width:90px"></div><div class="c" style="left:17px;top:0.5px;width:62px">Project</div></div>
<div class="c" style="left:40px;top:583.5px;width:71px;text-align:right;padding-right:3px">16</div>
<div class="c" style="left:112px;top:583.5px;width:140px;padding-left:4px">T # 15</div>
<div class="c" style="left:254px;top:583.5px;width:400px;padding-left:3.5px"></div>
<div class="c" style="left:659px;top:583.5px;width:474px;padding-left:3.5px">Chapter 8: Make Your Attitudes Your Allies</div>
<div class="c" style="left:1134px;top:583.5px;width:223px;padding-left:3.3px"></div>
<div class="abs" style="left:1358px;top:583px;width:79px;height:23px;overflow:hidden"><div class="chip" style="left:10px;top:2.5px;width:90px"></div><div class="c" style="left:17px;top:0.5px;width:62px">Project</div></div>
<div class="c" style="left:40px;top:607.5px;width:71px;text-align:right;padding-right:3px">17</div>
<div class="c" style="left:112px;top:607.5px;width:140px;padding-left:4px">T # 16</div>
<div class="c" style="left:254px;top:607.5px;width:400px;padding-left:3.5px"></div>
<div class="c" style="left:659px;top:607.5px;width:474px;padding-left:3.5px">Chapter 9: Think Right Toward People</div>
<div class="c" style="left:1134px;top:607.5px;width:223px;padding-left:3.3px"></div>
<div class="abs" style="left:1358px;top:607px;width:79px;height:23px;overflow:hidden"><div class="chip" style="left:10px;top:2.5px;width:90px"></div><div class="c" style="left:17px;top:0.5px;width:62px">Project</div></div>
<div class="c" style="left:40px;top:631.5px;width:71px;text-align:right;padding-right:3px">18</div>
<div class="c" style="left:112px;top:631.5px;width:140px;padding-left:4px">T # 17</div>
<div class="c" style="left:254px;top:631.5px;width:400px;padding-left:3.5px"></div>
<div class="c" style="left:659px;top:631.5px;width:474px;padding-left:3.5px">Chapter 10: Get the Action Habit</div>
<div class="c" style="left:1134px;top:631.5px;width:223px;padding-left:3.3px"></div>
<div class="abs" style="left:1358px;top:631px;width:79px;height:23px;overflow:hidden"><div class="chip" style="left:10px;top:2.5px;width:90px"></div><div class="c" style="left:17px;top:0.5px;width:62px">Project</div></div>
<div class="c" style="left:40px;top:655.5px;width:71px;text-align:right;padding-right:3px">19</div>
<div class="c" style="left:112px;top:655.5px;width:140px;padding-left:4px">T # 18</div>
<div class="c" style="left:254px;top:655.5px;width:400px;padding-left:3.5px"></div>
<div class="c" style="left:659px;top:655.5px;width:474px;padding-left:3.5px">Chapter 11: How to Turn Defeat into Victory</div>
<div class="c" style="left:1134px;top:655.5px;width:223px;padding-left:3.3px"></div>
<div class="abs" style="left:1358px;top:655px;width:79px;height:23px;overflow:hidden"><div class="chip" style="left:10px;top:2.5px;width:90px"></div><div class="c" style="left:17px;top:0.5px;width:62px">Project</div></div>
<div class="c" style="left:40px;top:679.5px;width:71px;text-align:right;padding-right:3px">20</div>
<div class="c" style="left:112px;top:679.5px;width:140px;padding-left:4px">T # 19</div>
<div class="c" style="left:254px;top:679.5px;width:400px;padding-left:3.5px"></div>
<div class="c" style="left:659px;top:679.5px;width:474px;padding-left:3.5px">Chapter 12: Use Goals to Help You Grow</div>
<div class="c" style="left:1134px;top:679.5px;width:223px;padding-left:3.3px"></div>
<div class="abs" style="left:1358px;top:679px;width:79px;height:23px;overflow:hidden"><div class="chip" style="left:10px;top:2.5px;width:90px"></div><div class="c" style="left:17px;top:0.5px;width:62px">Project</div></div>
<div class="c" style="left:40px;top:703.5px;width:71px;text-align:right;padding-right:3px">21</div>
<div class="c" style="left:112px;top:703.5px;width:140px;padding-left:4px">T # 20</div>
<div class="c" style="left:254px;top:703.5px;width:400px;padding-left:3.5px"></div>
<div class="c" style="left:659px;top:703.5px;width:474px;padding-left:3.5px">Chapter 13: How to Think Like a Leader</div>
<div class="c" style="left:1134px;top:703.5px;width:223px;padding-left:3.3px"></div>
<div class="abs" style="left:1358px;top:703px;width:79px;height:23px;overflow:hidden"><div class="chip" style="left:10px;top:2.5px;width:90px"></div><div class="c" style="left:17px;top:0.5px;width:62px">Project</div></div>
<div class="c" style="left:40px;top:727.5px;width:71px;text-align:right;padding-right:3px">22</div>
<div class="c" style="left:112px;top:727.5px;width:140px;padding-left:4px">T # 21</div>
<div class="c" style="left:254px;top:727.5px;width:400px;padding-left:3.5px"></div>
<div class="c" style="left:659px;top:727.5px;width:474px;padding-left:3.5px">3 take way from Magic of thinking Big</div>
<div class="c" style="left:1134px;top:727.5px;width:223px;padding-left:3.3px"></div>
<div class="abs" style="left:1358px;top:727px;width:79px;height:23px;overflow:hidden"><div class="chip" style="left:10px;top:2.5px;width:90px"></div><div class="c" style="left:17px;top:0.5px;width:62px">Project</div></div>
<div class="c" style="left:40px;top:751.5px;width:71px;text-align:right;padding-right:3px">23</div>
<div class="c" style="left:112px;top:751.5px;width:140px;padding-left:4px">d</div>
<div class="chip" style="left:264px;top:753.5px;width:384px;background:#e8eaed"></div>
<div class="t" style="left:271px;top:756px;font-size:15px;color:#000">SCM Course On Udemy</div>
<div class="arr" style="left:631px;top:760.5px;border-top-color:#000"></div>
<div class="c" style="left:659px;top:751.5px;width:474px;padding-left:3.5px"></div>
<div class="c" style="left:1134px;top:751.5px;width:223px;padding-left:3.3px"></div>
<div class="abs" style="left:658px;top:293px;width:476px;height:25px;border:2px solid #1a73e8"></div>
<div class="abs" style="left:1128px;top:314px;width:10px;height:10px;border-radius:50%;background:#0b57d0;border:1px solid #fff"></div>
<div class="abs" style="left:1439px;top:198px;width:10px;height:29px;border-radius:5px;background:#dadce0"></div>
<div class="abs" style="left:1468px;top:83px;width:360px;height:700px;background:#fff;border:1px solid #dadce0;border-radius:16px 16px 0 0"></div>
<div class="t" style="left:1487px;top:101px;font-size:11px;color:#5f6368;letter-spacing:1.5px">TASKS</div>
<div class="t" style="left:1487px;top:118.5px;font-size:18.5px;color:#3c4043">Book Summary</div>
<div class="arr" style="left:1622px;top:126px;border-left-width:6px;border-right-width:6px;border-top:6px solid #444746"></div>
<svg style="left:1743.5px;top:109.8px" width="18" height="18" viewBox="0 0 18 18"><path d="M8 1.5H3A1.5 1.5 0 0 0 1.5 3v12A1.5 1.5 0 0 0 3 16.5h12a1.5 1.5 0 0 0 1.5-1.5V10" fill="none" stroke="#444746" stroke-width="2"/><path d="M10.5 1.5h6v6M16.5 1.5L7 11" fill="none" stroke="#444746" stroke-width="2"/></svg>
<svg style="left:1790.5px;top:112.8px" width="13.5" height="13" viewBox="0 0 13.5 13"><path d="M1 1l11.5 11M12.5 1L1 12" stroke="#444746" stroke-width="2"/></svg>
<div class="abs" style="left:1469px;top:155px;width:358px;height:1px;background:#e3e3e3"></div>
<svg style="left:1486px;top:168px" width="22" height="22" viewBox="0 0 22 22"><path d="M17 6.5A8.5 8.5 0 1 0 18 13" fill="none" stroke="#0b57d0" stroke-width="2"/><path d="M6 10l4 4 8-8" fill="none" stroke="#0b57d0" stroke-width="2"/><path d="M17.5 14v7M14 17.5h7" stroke="#0b57d0" stroke-width="2"/></svg>
<div class="t" style="left:1526px;top:169.5px;font-size:16.3px;color:#0b57d0">Add a task</div>
<div class="abs" style="left:1796px;top:170px;width:4px;height:4px;border-radius:2px;background:#444746;box-shadow:0 6px 0 #444746,0 12px 0 #444746"></div>
<div class="abs" style="left:1487px;top:211px;width:18px;height:18px;border-radius:50%;border:2px solid #444746"></div>
<div class="t" style="left:1527px;top:211.5px;font-size:15.9px;color:#444746">Obsidian beginner guide.</div>
<div class="t" style="left:1527px;top:234.0px;font-size:15.9px;color:#444746">Install, create a Vault and use</div>
<div class="t" style="left:1527px;top:256.5px;font-size:15.9px;color:#444746">Mediation qoutes.</div>
<svg style="left:1866.5px;top:97.5px" width="22" height="22" viewBox="0 0 22 22"><rect x="0" y="0" width="22" height="22" rx="1.5" fill="#4285f4"/><rect x="4.5" y="4.5" width="17.5" height="13" fill="#fff"/><rect x="0" y="17.5" width="22" height="4.5" fill="#34a853"/><rect x="17.5" y="4.5" width="4.5" height="17.5" fill="#ea4335"/><rect x="17.5" y="0" width="4.5" height="4.5" fill="#fbbc04"/><text x="5.5" y="15" font-size="9.5" font-family="Liberation Sans" fill="#4285f4">31</text></svg>
<div class="abs" style="left:1866.5px;top:160px;width:20px;height:22.5px;border-radius:2.5px;background:#fbbc04"></div>
<div class="abs" style="left:1872px;top:164.5px;width:10px;height:10px;border-radius:50%;background:#fff"></div><div class="abs" style="left:1874.5px;top:175.5px;width:5px;height:2px;background:#fff"></div>
<div class="abs" style="left:1847px;top:211px;width:4px;height:45px;border-radius:2px;background:#4285f4"></div>
<div class="abs" style="left:1855px;top:211px;width:45px;height:45px;border-radius:50%;background:#e8f0fe"></div>
<svg style="left:1868px;top:225.5px" width="20" height="20" viewBox="0 0 20 20"><circle cx="10" cy="10" r="8.3" fill="none" stroke="#1a73e8" stroke-width="3"/><path d="M5.5 10l3.3 3.3 6-6" fill="none" stroke="#1a73e8" stroke-width="2.8"/></svg>
<div class="abs" style="left:1873px;top:287.5px;width:8px;height:8px;border-radius:50%;background:#1a73e8"></div>
<div class="abs" style="left:1869.5px;top:297px;width:16px;height:9.5px;border-radius:6px 6px 2px 2px;background:#1a73e8"></div>
<svg style="left:1869.5px;top:349px" width="15.5" height="22.5" viewBox="0 0 18 26"><path d="M9 0a9 9 0 0 1 9 9c0 6-9 17-9 17S0 15 0 9a9 9 0 0 1 9-9z" fill="#34a853"/><path d="M9 0a9 9 0 0 1 9 9H9z" fill="#4285f4"/><path d="M0 9a9 9 0 0 1 9-9v9z" fill="#ea4335"/><path d="M18 9c0 3-2 6-4 9L9 9z" fill="#fbbc04"/><circle cx="9" cy="9" r="3" fill="#fff"/></svg>
<div class="abs" style="left:1879px;top:388px;width:2px;height:2px;background:#e00"></div>
<div class="abs" style="left:1865px;top:408px;width:19px;height:1px;background:#dadce0"></div>
<svg style="left:1868.5px;top:451.5px" width="17" height="17" viewBox="0 0 18 18"><path d="M9 1v16M1 9h16" stroke="#1f1f1f" stroke-width="2"/></svg>
<div class="abs" style="left:1877px;top:546px;width:7px;height:3px;border-radius:2px;background:#e00;transform:rotate(-15deg)"></div>
<div class="abs" style="left:572px;top:43px;width:106px;height:60px;border:3px solid #ff0000;border-radius:2px"></div>
<div class="abs" style="left:657px;top:278px;width:499px;height:54px;border:3px solid #ff0000;border-radius:2px"></div>
<div class="abs" style="left:1462px;top:174px;width:298px;height:189px;border:3px solid #ff0000;border-radius:2px"></div>
<svg style="left:0;top:0" width="1884" height="777"><path d="M1473.1 197.5 L1476.7 205.9 L1481.8 215.1 L1488.5 226.0 L1491.5 230.0 L1495.1 234.4 L1499.3 238.5 L1502.0 242.0 L1504.4 245.2 L1507.0 251.0 L1510.2 257.0 L1513.0 260.5 L1515.2 265.3 L1520.3 272.0 L1523.0 274.5 L1525.3 278.7 L1527.5 282.0 L1530.3 285.4 L1534.0 286.5 L1538.7 290.4 L1550.4 297.1 L1563.8 302.5 L1577.2 304.6 L1598.9 304.4" fill="none" stroke="#ff0000" stroke-width="2.6" stroke-linecap="round" stroke-linejoin="round"/></svg>
</body></html>
